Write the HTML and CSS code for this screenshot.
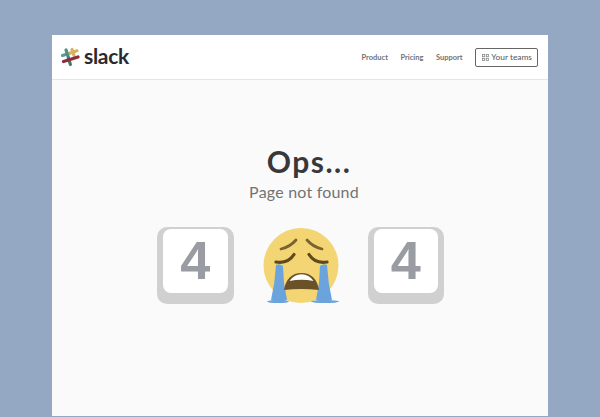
FILE: index.html
```html
<!DOCTYPE html>
<html lang="en">

<head>
    <meta charset="UTF-8" />
    <title>Page not found</title>
    <link rel="stylesheet" href="styles.css">
</head>

<body>
    <div class="window">
        <header class="topbar">
            <a class="brand">
                <svg class="brand-mark" width="20" height="20" viewBox="0 0 20 20">
                    <g fill="none" stroke-width="3.2" stroke-linecap="round">
                        <path d="M2.5 8.5 L9 6.4" stroke="#5b9a98" />
                        <path d="M9 6.4 L17 3.8" stroke="#d6b264" />
                        <path d="M12 2.5 L14 8.5" stroke="#d6b264" />
                        <path d="M6 3 L8.3 10" stroke="#4f8f8a" />
                        <path d="M8.3 11 L10.4 17.5" stroke="#3f7d62" />
                        <path d="M3.5 14.5 L18 10" stroke="#8f2a3c" />
                    </g>
                </svg>
                <span class="brand-name">slack</span>
            </a>
            <nav class="nav">
                <a>Product</a>
                <a>Pricing</a>
                <a>Support</a>
                <a class="teams-btn">
                    <svg width="7" height="7" viewBox="0 0 8 8" fill="none" stroke="#888" stroke-width="0.9">
                        <rect x="0.5" y="0.5" width="2.6" height="2.6" />
                        <rect x="4.9" y="0.5" width="2.6" height="2.6" />
                        <rect x="0.5" y="4.9" width="2.6" height="2.6" />
                        <rect x="4.9" y="4.9" width="2.6" height="2.6" />
                    </svg>
                    Your teams
                </a>
            </nav>
        </header>

        <main class="content">
            <h1>Ops...</h1>
            <p class="subtitle">Page not found</p>
            <div class="code-row">
                <div class="key"><span>4</span></div>
                <svg class="emoji" width="76" height="76" viewBox="0 0 76 76">
                    <circle cx="38" cy="37.5" r="37.5" fill="#f3d673" />
                    <ellipse cx="15" cy="73.6" rx="11" ry="1.5" fill="#6ba3dc" />
                    <ellipse cx="62" cy="73.6" rx="14" ry="1.5" fill="#6ba3dc" />
                    <path d="M18 21 Q27 19 33 12" fill="none" stroke="#7a6330" stroke-width="2.8" stroke-linecap="round" />
                    <path d="M59 21 Q50 19 44 12" fill="none" stroke="#7a6330" stroke-width="2.8" stroke-linecap="round" />
                    <path d="M13 34 Q25 36 31 26.5" fill="none" stroke="#5f4a1e" stroke-width="3.2" stroke-linecap="round" />
                    <path d="M64 34 Q52 36 46 26.5" fill="none" stroke="#5f4a1e" stroke-width="3.2" stroke-linecap="round" />
                    <path d="M13 37 Q16 35 20 38 L21 55 L24 72 Q16 76 8 72 Q12 55 13 37 Z" fill="#6ba3dc" />
                    <path d="M64 37 Q61 35 57 38 L56 55 L53 72 Q61 76 69 72 Q65 55 64 37 Z" fill="#6ba3dc" />
                    <path d="M21 62 Q24 45 38.5 45 Q53 45 56 62 Q38.5 60 21 62 Z" fill="#6b5226" />
                    <path d="M26.5 53 Q31 46.2 38.5 46.2 Q46 46.2 50.5 53 Q38.5 50.5 26.5 53 Z" fill="#fff" />
                </svg>
                <div class="key"><span>4</span></div>
            </div>
        </main>
    </div>
</body>

</html>
```
FILE: styles.css
```css
:root {
    --page-bg: #94a8c4;
    --text-dark: #38383b;
    --text-muted: #737373;
    --key-edge: #d0d0d0;
    --key-digit: #9a9ca3;
}

html,
body {
    height: 100%;
}

body {
    margin: 0;
    padding: 35px 52px 1px;
    box-sizing: border-box;
    background: var(--page-bg);
    font-family: Lato, "Open Sans", sans-serif;
    overflow: hidden;
}

.window {
    height: 100%;
    display: flex;
    flex-direction: column;
    background: #fafafa;
}

.topbar {
    height: 44px;
    flex-shrink: 0;
    display: flex;
    justify-content: space-between;
    align-items: center;
    padding: 0 10px 0 8px;
    background: #fff;
    border-bottom: 1px solid #e6e6e6;
}

.brand {
    display: flex;
    align-items: center;
    gap: 4px;
}

.brand-name {
    font-size: 21px;
    font-weight: 700;
    letter-spacing: -0.3px;
    color: #2a2a2e;
    line-height: 1;
    padding-bottom: 3px;
}

.nav {
    display: flex;
    align-items: center;
    gap: 12.5px;
    font-size: 7.5px;
    font-weight: 700;
    color: #737373;
}

.teams-btn {
    display: flex;
    align-items: center;
    gap: 2px;
    height: 17px;
    padding: 0 5px 0 6px;
    border: 1px solid #666;
    border-radius: 2px;
    font-size: 8.4px;
    font-weight: 400;
    color: #555;
}

.content {
    flex: 1;
    display: flex;
    flex-direction: column;
    align-items: center;
    padding-top: 61px;
}

h1 {
    margin: 0;
    padding-left: 18px;
    font-size: 30px;
    line-height: 40px;
    font-weight: 700;
    letter-spacing: 1.5px;
    color: var(--text-dark);
}

.subtitle {
    margin: 0;
    padding-left: 8px;
    font-size: 16px;
    line-height: 22px;
    letter-spacing: 0.2px;
    color: var(--text-muted);
}

.code-row {
    display: flex;
    align-items: center;
    gap: 29px;
    margin-top: 24px;
    margin-left: 1px;
}

.key {
    width: 64.5px;
    height: 64px;
    padding: 2px 6px 11px;
    background: var(--key-edge);
    border-radius: 10px;
}

.key span {
    display: flex;
    justify-content: center;
    align-items: center;
    height: 100%;
    padding-bottom: 3px;
    box-sizing: border-box;
    background: #fff;
    border-radius: 8px;
    font-family: "Liberation Sans", sans-serif;
    font-size: 54px;
    font-weight: 700;
    color: var(--key-digit);
}
```
